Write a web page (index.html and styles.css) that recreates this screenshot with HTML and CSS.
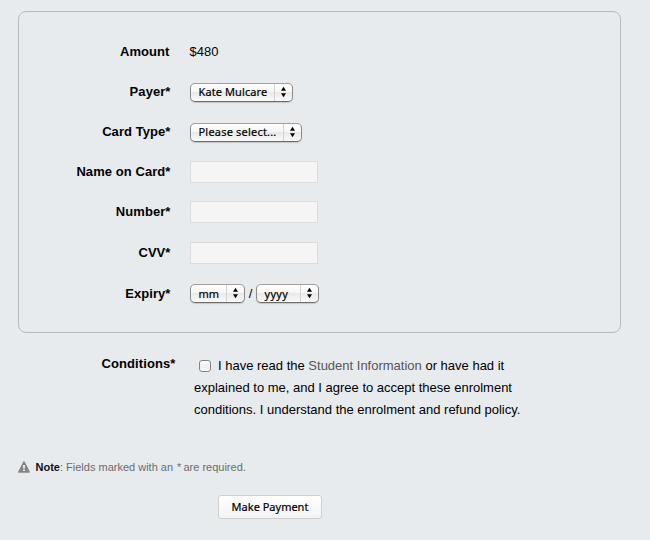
FILE: index.html
```html
<!DOCTYPE html>
<html lang="en">
<head>
<meta charset="utf-8">
<title>Make Payment</title>
<link rel="stylesheet" href="styles.css">
</head>
<body>
<form class="payment">
  <div class="panel">
    <div class="row"><span class="label plain">Amount</span><span class="amount">$480</span></div>
    <div class="row"><span class="label">Payer*</span>
      <span class="select payer"><span class="value">Kate Mulcare</span><svg class="arrows" viewBox="0 0 17 17"><path d="M8.5 2.7 11 6.7H6zM8.5 13.3 11 9.3H6z"/></svg></span></div>
    <div class="row"><span class="label">Card Type*</span>
      <span class="select card"><span class="value">Please select...</span><svg class="arrows" viewBox="0 0 17 17"><path d="M8.5 2.7 11 6.7H6zM8.5 13.3 11 9.3H6z"/></svg></span></div>
    <div class="row"><label class="label" for="name">Name on Card*</label><input class="field" id="name" type="text"></div>
    <div class="row"><label class="label" for="number">Number*</label><input class="field" id="number" type="text"></div>
    <div class="row tall"><label class="label" for="cvv">CVV*</label><input class="field" id="cvv" type="text"></div>
    <div class="row tall"><span class="label">Expiry*</span>
      <span class="select month"><span class="value">mm</span><svg class="arrows" viewBox="0 0 17 17"><path d="M8.5 2.7 11 6.7H6zM8.5 13.3 11 9.3H6z"/></svg></span>
      <span class="slash">/</span>
      <span class="select year"><span class="value">yyyy</span><svg class="arrows" viewBox="0 0 17 17"><path d="M8.5 2.7 11 6.7H6zM8.5 13.3 11 9.3H6z"/></svg></span></div>
  </div>
  <div class="conditions">
    <span class="conditions-label">Conditions*</span>
    <p class="terms"><input class="check" type="checkbox" aria-label="Accept conditions">I have read the <a class="link">Student Information</a> or have had it<br>explained to me, and I agree to accept these enrolment<br>conditions. I understand the enrolment and refund policy.</p>
  </div>
  <p class="note"><svg class="warning" viewBox="0 0 12 12"><path class="tri" d="M6 .8 11.2 11H.8z"/><path class="mark" d="M5.2 4h1.6v3.6H5.2zM5.2 8.6h1.6v1.5H5.2z"/></svg><span><b>Note</b>: Fields marked with an <span class="star">*</span> are required.</span></p>
  <button class="submit" type="button">Make Payment</button>
</form>
</body>
</html>
```
FILE: styles.css
```css
* { box-sizing: border-box; }
body {
  margin: 0;
  background: #e7ebee;
  color: #000;
  font: 13px/22px "Liberation Sans", Arial, sans-serif;
}
.payment { padding: 11px 29px 0 18px; }
.panel {
  height: 322px;
  padding-top: 20px;
  border: 1px solid #b9bcbf;
  border-radius: 8px;
}
.row { display: flex; align-items: center; height: 40px; }
.tall { height: 41px; }
.label {
  width: 152px;
  margin-right: 19px;
  font-weight: bold;
  letter-spacing: .07px;
  text-align: right;
  padding-right: .5px;
}
.plain { padding-right: 1.5px; }
.amount { margin-left: -.5px; }
.select {
  display: flex;
  align-items: center;
  height: 19px;
  padding-left: 7.5px;
  border: 1px solid #8c8c8c;
  border-top-color: #a0a0a0;
  border-bottom-color: #6c6c6c;
  border-radius: 5px;
  background: linear-gradient(#fff, #f6f6f6 48%, #e9e9e9 50%, #fbfbfb);
  box-shadow: 0 1px 1px rgba(0, 0, 0, .15);
  font: 11px/17px "Noto Sans", "Open Sans", sans-serif;
  -webkit-text-stroke: .2px #000;
}
.value { flex: 1; margin-top: -1px; white-space: nowrap; }
.arrows { width: 18px; height: 17px; flex: none; border-left: 1px solid #d2d2d2; -webkit-text-stroke: 0; }
.payer { width: 103px; letter-spacing: .1px; }
.card { width: 112px; letter-spacing: .2px; }
.month { width: 55px; }
.month .value, .year .value { margin-top: 0; }
.year { width: 63px; letter-spacing: .3px; }
.slash { width: 11px; text-align: center; }
.field {
  width: 128px;
  height: 22px;
  border: 1px solid #dcdcdc;
  background: #f5f5f5;
}
.conditions { display: flex; margin-top: 20px; }
.conditions-label {
  width: 158px;
  margin-right: 18px;
  padding-right: .5px;
  font-weight: bold;
  letter-spacing: .1px;
  text-align: right;
}
.terms { margin: 2px 0 0; white-space: nowrap; }
.check {
  appearance: none;
  width: 12px;
  height: 12px;
  margin: 0 7px 0 5px;
  border: 1px solid #858585;
  border-radius: 3px;
  background: linear-gradient(#fff, #eee 60%, #fff);
  vertical-align: -2px;
}
.link { color: #555; }
.note {
  display: flex;
  align-items: center;
  margin: 35px 0 0;
  color: #6c6c6c;
  font-size: 11px;
}
.note b { color: #111; }
.star { margin: 0 -1px 0 1px; }
.warning { width: 12px; height: 12px; margin-right: 5.5px; }
.tri { fill: #858585; stroke: #858585; stroke-width: 1.4; stroke-linejoin: round; }
.mark { fill: #fff; }
.submit {
  display: block;
  width: 104px;
  height: 24px;
  margin: 17px 0 0 200px;
  padding: 0;
  border: 1px solid #cfcfcf;
  border-radius: 3px;
  background: linear-gradient(#fff, #f4f4f4);
  color: #000;
  font: 11px/20px "Noto Sans", "Open Sans", sans-serif;
  -webkit-text-stroke: .2px #000;
}
```
